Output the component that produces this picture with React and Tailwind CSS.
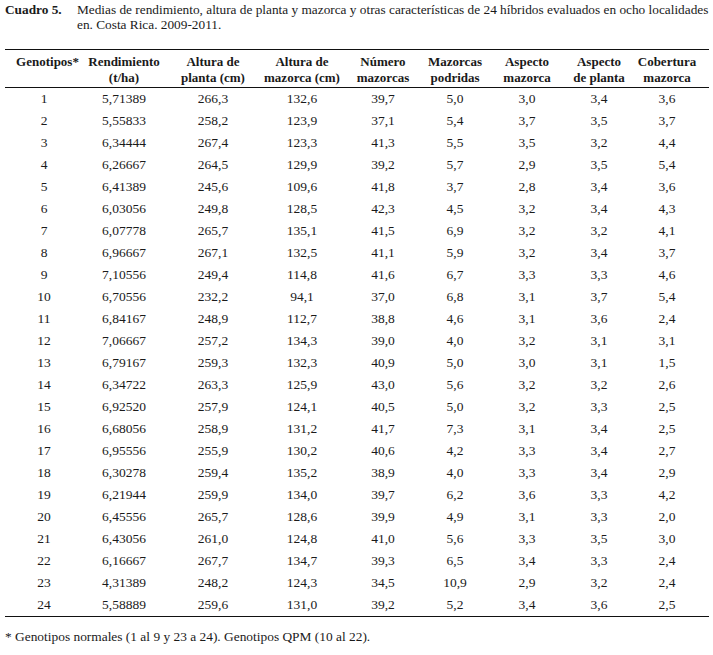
import React from "react";

const rows = [
  ["1","5,71389","266,3","132,6","39,7","5,0","3,0","3,4","3,6"],
  ["2","5,55833","258,2","123,9","37,1","5,4","3,7","3,5","3,7"],
  ["3","6,34444","267,4","123,3","41,3","5,5","3,5","3,2","4,4"],
  ["4","6,26667","264,5","129,9","39,2","5,7","2,9","3,5","5,4"],
  ["5","6,41389","245,6","109,6","41,8","3,7","2,8","3,4","3,6"],
  ["6","6,03056","249,8","128,5","42,3","4,5","3,2","3,4","4,3"],
  ["7","6,07778","265,7","135,1","41,5","6,9","3,2","3,2","4,1"],
  ["8","6,96667","267,1","132,5","41,1","5,9","3,2","3,4","3,7"],
  ["9","7,10556","249,4","114,8","41,6","6,7","3,3","3,3","4,6"],
  ["10","6,70556","232,2","94,1","37,0","6,8","3,1","3,7","5,4"],
  ["11","6,84167","248,9","112,7","38,8","4,6","3,1","3,6","2,4"],
  ["12","7,06667","257,2","134,3","39,0","4,0","3,2","3,1","3,1"],
  ["13","6,79167","259,3","132,3","40,9","5,0","3,0","3,1","1,5"],
  ["14","6,34722","263,3","125,9","43,0","5,6","3,2","3,2","2,6"],
  ["15","6,92520","257,9","124,1","40,5","5,0","3,2","3,3","2,5"],
  ["16","6,68056","258,9","131,2","41,7","7,3","3,1","3,4","2,5"],
  ["17","6,95556","255,9","130,2","40,6","4,2","3,3","3,4","2,7"],
  ["18","6,30278","259,4","135,2","38,9","4,0","3,3","3,4","2,9"],
  ["19","6,21944","259,9","134,0","39,7","6,2","3,6","3,3","4,2"],
  ["20","6,45556","265,7","128,6","39,9","4,9","3,1","3,3","2,0"],
  ["21","6,43056","261,0","124,8","41,0","5,6","3,3","3,5","3,0"],
  ["22","6,16667","267,7","134,7","39,3","6,5","3,4","3,3","2,4"],
  ["23","4,31389","248,2","124,3","34,5","10,9","2,9","3,2","2,4"],
  ["24","5,58889","259,6","131,0","39,2","5,2","3,4","3,6","2,5"],
];

const headers = [
  ["Genotipos*", ""],
  ["Rendimiento", "(t/ha)"],
  ["Altura de", "planta (cm)"],
  ["Altura de", "mazorca (cm)"],
  ["Número", "mazorcas"],
  ["Mazorcas", "podridas"],
  ["Aspecto", "mazorca"],
  ["Aspecto", "de planta"],
  ["Cobertura", "mazorca"],
];

const grid =
  "grid grid-cols-[78px_82px_96px_82px_80px_64px_80px_64px_72px]";

export default function App() {
  return (
    <div
      className="w-[713px] h-[655px] bg-white text-[#1a1a1a] overflow-hidden"
      style={{ fontFamily: '"Liberation Serif", "Times New Roman", serif' }}
    >
      <div className="flex pl-[5px] pt-[2px] leading-[15px] text-[13.3px]">
        <div className="w-[72px] shrink-0 font-bold">Cuadro 5.</div>
        <div className="w-[634px]">
          Medias de rendimiento, altura de planta y mazorca y otras características de 24 híbridos evaluados en ocho localidades en. Costa Rica. 2009-2011.
        </div>
      </div>

      <div className="ml-[5px] w-[704px] mt-[17px] border-t border-b border-[#111]">
        <div className={`${grid} font-bold text-[13px] leading-[16px] pt-[4px] pb-[1px] border-b border-[#111]`}>
          {headers.map((h, i) => (
            <div key={i} className={`text-center ${i === 0 ? "pl-[7px]" : ""}`}>
              <div>{h[0]}</div>
              <div>{h[1] || "\u00a0"}</div>
            </div>
          ))}
        </div>
        <div className="text-[13.5px]">
          {rows.map((r, i) => (
            <div key={i} className={`${grid} h-[22px] items-center leading-[22px]`}>
              {r.map((c, j) => (
                <div key={j} className="text-center">{c}</div>
              ))}
            </div>
          ))}
        </div>
      </div>

      <div className="pl-[5px] mt-[12px] leading-[15px] text-[13.4px]">
        * Genotipos normales (1 al 9 y 23 a 24). Genotipos QPM (10 al 22).
      </div>
    </div>
  );
}
